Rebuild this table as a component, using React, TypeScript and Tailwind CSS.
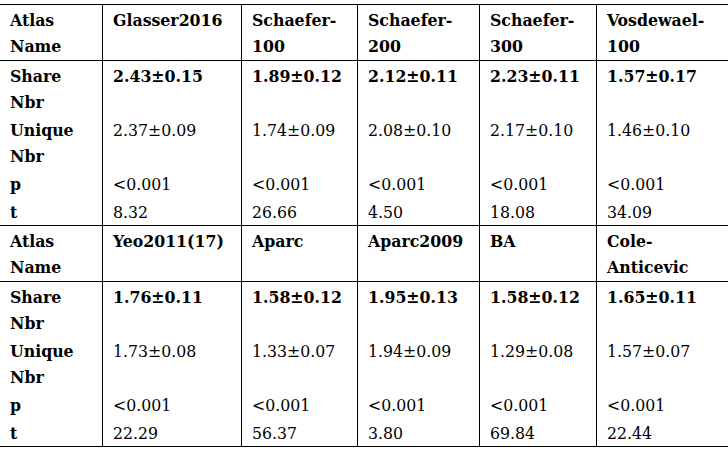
import { Fragment } from "react";

const blocks = [
  {
    atlases: [["Glasser2016"], ["Schaefer-", "100"], ["Schaefer-", "200"], ["Schaefer-", "300"], ["Vosdewael-", "100"]],
    share: ["2.43±0.15", "1.89±0.12", "2.12±0.11", "2.23±0.11", "1.57±0.17"],
    unique: ["2.37±0.09", "1.74±0.09", "2.08±0.10", "2.17±0.10", "1.46±0.10"],
    p: ["<0.001", "<0.001", "<0.001", "<0.001", "<0.001"],
    t: ["8.32", "26.66", "4.50", "18.08", "34.09"],
  },
  {
    atlases: [["Yeo2011(17)"], ["Aparc"], ["Aparc2009"], ["BA"], ["Cole-", "Anticevic"]],
    share: ["1.76±0.11", "1.58±0.12", "1.95±0.13", "1.58±0.12", "1.65±0.11"],
    unique: ["1.73±0.08", "1.33±0.07", "1.94±0.09", "1.29±0.08", "1.57±0.07"],
    p: ["<0.001", "<0.001", "<0.001", "<0.001", "<0.001"],
    t: ["22.29", "56.37", "3.80", "69.84", "22.44"],
  },
];

const widths = ["w-[103px]", "w-[139px]", "w-[116px]", "w-[122px]", "w-[117px]", "w-[131px]"];

function Cell({ i, children, className = "" }: { i: number; children: React.ReactNode; className?: string }) {
  return (
    <td className={`${widths[i]} ${i < 5 ? "border-r border-black" : ""} pl-[10px] pr-0 align-top whitespace-nowrap ${className}`}>
      {children}
    </td>
  );
}

function Lines({ lines }: { lines: string[] }) {
  return (
    <>
      {lines.map((l, k) => (
        <div key={k}>{l}</div>
      ))}
    </>
  );
}

export default function App() {
  return (
    <div
      className="w-[728px] h-[451px] bg-white pt-[4px] text-black text-[17.5px] leading-[26px] overflow-hidden"
      style={{ fontFamily: '"DejaVu Serif Condensed", "DejaVu Serif", serif', fontStretch: "condensed" }}
    >
      <table className="table-fixed border-separate border-spacing-0 w-[728px] border-b border-black">
        <tbody>
          {blocks.map((b, bi) => (
            <Fragment key={bi}>
              <tr className="font-bold">
                <Cell i={0} className="border-t pt-[2px] pb-[1px]">
                  <Lines lines={["Atlas", "Name"]} />
                </Cell>
                {b.atlases.map((a, k) => (
                  <Cell key={k} i={k + 1} className="border-t pt-[2px] pb-[1px]">
                    <Lines lines={a} />
                  </Cell>
                ))}
              </tr>
              <tr>
                <Cell i={0} className="border-t pt-[2px] font-bold">
                  <Lines lines={["Share", "Nbr"]} />
                </Cell>
                {b.share.map((v, k) => (
                  <Cell key={k} i={k + 1} className="border-t pt-[2px] font-bold">
                    {v}
                  </Cell>
                ))}
              </tr>
              <tr>
                <Cell i={0} className="pt-[2px] font-bold">
                  <Lines lines={["Unique", "Nbr"]} />
                </Cell>
                {b.unique.map((v, k) => (
                  <Cell key={k} i={k + 1} className="pt-[2px]">
                    {v}
                  </Cell>
                ))}
              </tr>
              <tr>
                <Cell i={0} className="pt-[2px] font-bold">p</Cell>
                {b.p.map((v, k) => (
                  <Cell key={k} i={k + 1} className="pt-[2px]">
                    {v}
                  </Cell>
                ))}
              </tr>
              <tr>
                <Cell i={0} className="pt-[2px] font-bold">t</Cell>
                {b.t.map((v, k) => (
                  <Cell key={k} i={k + 1} className="pt-[2px]">
                    {v}
                  </Cell>
                ))}
              </tr>
            </Fragment>
          ))}
        </tbody>
      </table>
    </div>
  );
}
